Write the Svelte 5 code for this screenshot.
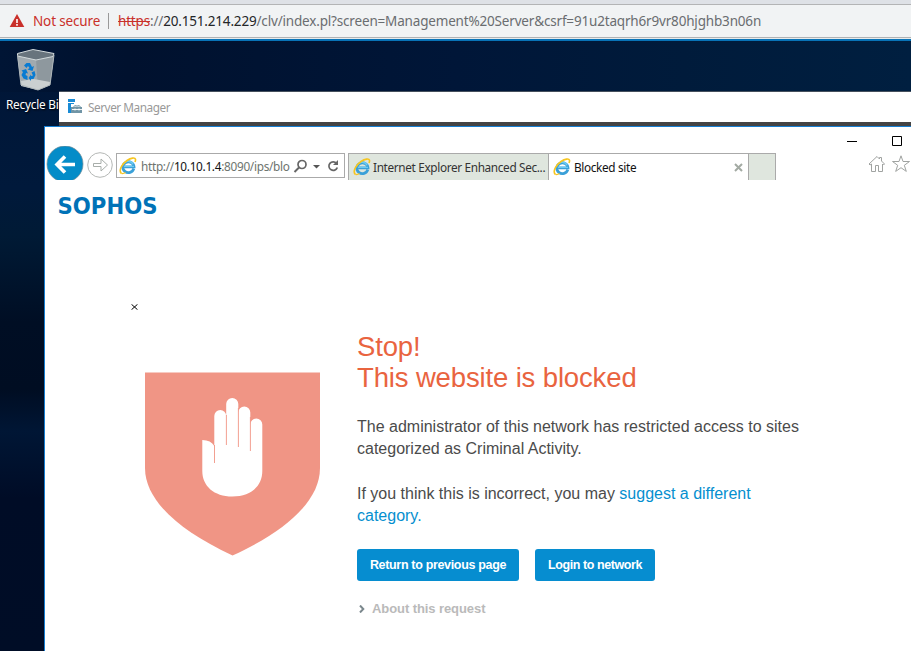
<script>
  const tabs = [
    { title: 'Internet Explorer Enhanced Sec...', active: false },
    { title: 'Blocked site', active: true }
  ];
</script>

{#snippet ieIcon()}
  <svg class="ie" viewBox="0 0 18 18" width="18" height="18">
    <path d="M14.8 11.7A5.6 5.4 0 1 1 15 9.8H5.4" fill="none" stroke="#3aa0d8" stroke-width="2.8" />
    <path d="M14.2 7.4A5.6 5.6 0 0 0 3.9 8M5 9.3H15" fill="none" stroke="#6ccbf2" stroke-width="1.3" />
    <path d="M2.3 16.4C-.5 13.5 2.6 7.2 8 3.5C12 .8 16 .3 16.5 2.3C16.7 3.2 16.4 4 16 5" fill="none" stroke="#f6c51f" stroke-width="1.6" />
    <path d="M2.3 16.4Q4.5 16.9 6.5 15.5" fill="none" stroke="#f6c51f" stroke-width="1.2" />
  </svg>
{/snippet}

<div class="screen">
  <header class="omnibox">
    <svg width="16" height="14" viewBox="0 0 16 14"><path d="M8 0L15.3 13H.7Z" fill="#c9302a" /><path d="M8 5v4M8 10v1.7" stroke="#fff" stroke-width="1.6" /></svg>
    <span class="warn">Not secure</span>
    <i class="divider"></i>
    <span class="address"><s>https</s>://<b>20.151.214.229</b>/clv/index.pl?screen=Management%20Server&amp;csrf=91u2taqrh6r9vr80hjghb3n06n</span>
  </header>

  <main class="desktop">
    <div class="recycle">
      <svg width="40" height="44" viewBox="0 0 40 44">
        <path d="M1 6L20 11L38 8L34 37L22 42L5 37Z" fill="#a1aaaf" />
        <path d="M20 11L38 8L34 37L22 42Z" fill="#8e989e" />
        <path d="M5 33L18 31L34 34L34 37L22 42L5 38Z" fill="#cbd0d1" />
        <path d="M1.5 5.5L17 1.5L38 5.5L37 8.5L20 12L1.5 8Z" fill="#68747d" stroke="#d3dadc" />
        <path d="M1.5 7L5 37L22 42L34 37L38 7" fill="none" stroke="#aeb6b9" />
        <g fill="#087bd2">
          <path d="M8 17.5L10.5 15H14L16 19L18 18L16.5 23L11.5 21.5L13.5 20L12 18L10.5 20Z" />
          <path d="M5.5 22.5L10 21L12 25.5L10 25L9.5 27L11.5 28V32L7.5 30.5L5.5 27L7 24Z" />
          <path d="M15.5 24.5L18.5 23L19.5 27L17.5 31L15 31V33L12.5 30L15 26.5V28L17 27.5Z" />
        </g>
      </svg>
      <span>Recycle Bin</span>
    </div>

    <section class="server-manager">
      <svg width="16" height="16" viewBox="0 0 16 16">
        <path d="M1 0H8V3H1ZM1 4H4V14H1Z" fill="#198bd5" /><path d="M3 4H7V5H4V14H3Z" fill="#198bd5" />
        <path d="M4 8H6L8 6H12L14 8H15V14H4Z" fill="#7195a6" /><path d="M7.5 8L8.5 7H11.5L12.5 8M5 10.5H15M8 9.5V11.5M12 9.5V11.5" fill="none" stroke="#fff" stroke-width=".9" />
      </svg>
      <span>Server Manager</span>
    </section>

    <section class="browser">
      <div class="controls">
        <svg width="11" height="11" viewBox="0 0 11 11"><path d="M0 5.5H10" stroke="#000" /></svg>
        <svg width="11" height="11" viewBox="0 0 11 11"><path d="M.5 .5H9.5V9.5H.5Z" fill="none" stroke="#000" /></svg>
      </div>
      <div class="toolbar">
        <svg class="nav" width="70" height="34" viewBox="0 0 70 34">
          <circle cx="20" cy="18" r="18" fill="#048cc8" stroke="#718b96" stroke-width=".7" />
          <path d="M30 18.5H13M20 10.5L12 18.5L20 26.5" fill="none" stroke="#fff" stroke-width="3.6" />
          <circle cx="55" cy="19" r="12.3" fill="#fff" stroke="#b5b8b6" />
          <path d="M48.5 17.5H56V13L62.5 19L56 25V20.5H48.5Z" fill="#fff" stroke="#a8aeaa" />
        </svg>
        <div class="location">
          {@render ieIcon()}
          <span class="loc-text">http://<b>10.10.1.4</b>:8090/ips/blo</span>
          <svg class="tools" width="47" height="16" viewBox="0 0 47 16">
            <circle cx="9" cy="6.5" r="4" fill="none" stroke="#666" stroke-width="1.7" /><path d="M6 9.5L1.5 14" stroke="#666" stroke-width="2" />
            <path d="M20 7H27L23.5 10.5Z" fill="#555" />
            <path d="M43.5 5.3A4.3 4.3 0 1 0 44.3 9.5" fill="none" stroke="#666" stroke-width="1.7" /><path d="M45 2V7H40Z" fill="#666" />
          </svg>
        </div>
        <div class="tabs">
          {#each tabs as tab}
            <div class="tab" class:active={tab.active}>
              {@render ieIcon()}
              <span>{tab.title}</span>
              {#if tab.active}
                <svg class="close" width="9" height="9" viewBox="0 0 9 9"><path d="M1 1L8 8M8 1L1 8" stroke="#a3aaa3" stroke-width="2" /></svg>
              {/if}
            </div>
          {/each}
          <div class="new-tab"></div>
        </div>
        <svg class="shortcuts" width="43" height="18" viewBox="0 0 43 18">
          <path d="M1 9L9 1.5L11.5 4V2.5H13.5V6L16.5 9L15.5 10L14.5 9V16.5H10.5V10.5H7.5V16.5H3.5V9L2 10Z" fill="#fff" stroke="#a0a3a1" />
          <path d="M33 .8L35 6.5H41.5L36.3 10.3L38.3 16.4L33 12.7L27.7 16.4L29.7 10.3L24.5 6.5H31Z" fill="#fff" stroke="#a0a3a1" />
        </svg>
      </div>

      <div class="page">
        <svg class="logo" width="100" height="20" viewBox="0 0 100 20"><text x="-.5" y="18" textLength="100" lengthAdjust="spacingAndGlyphs">SOPHOS</text></svg>
        <svg class="missing" width="7" height="6" viewBox="0 0 7 6"><path d="M.5 .3L6.5 5.7M6.5 .3L.5 5.7" stroke="#000" /></svg>
        <div class="notice">
          <svg class="shield" width="176" height="184" viewBox="0 0 176 184">
            <path d="M0 .5H175V96C175 128 143 158 87.5 183.5C33 158 0 128 0 96Z" fill="#f09585" />
            <path d="M57.3 68Q66 68 69.3 74V44A5.6 5.6 0 0 1 81.2 44V32A5.6 5.6 0 0 1 93.3 32V40.5A5.6 5.6 0 0 1 105.3 40.5V52.5A5.6 5.6 0 0 1 117.3 52.5V99C117.3 114 106 124.5 87.3 124.5C69 124.5 57.3 114 57.3 99Z" fill="#fff" />
            <path d="M69.5 73V91M81.4 43V73M93.4 36V75M105.4 45V79" stroke="#f09585" stroke-width=".9" />
          </svg>
          <div class="message">
            <h1>Stop!<br />This website is blocked</h1>
            <p>The administrator of this network has restricted access to sites<br />categorized as Criminal Activity.</p>
            <p>If you think this is incorrect, you may <a href="#suggest">suggest a different<br />category.</a></p>
            <div class="actions"><button class="back">Return to previous page</button><button class="login">Login to network</button></div>
            <div class="about">
              <svg width="6" height="8" viewBox="0 0 6 8"><path d="M1 .5L4.3 4L1 7.5" fill="none" stroke="#7b888d" stroke-width="2" /></svg>
              <span>About this request</span>
            </div>
          </div>
        </div>
      </div>
    </section>
  </main>
</div>

<style>
  :global(body) { margin: 0; overflow: hidden; }
  * { box-sizing: border-box; }
  svg { display: block; flex: none; }
  .screen { width: 911px; height: 651px; overflow: hidden; display: flex; flex-direction: column; font-family: "Noto Sans", "Open Sans", sans-serif; white-space: nowrap; }
  .omnibox { height: 39px; flex: none; display: flex; align-items: center; border-top: 4px solid #dee1e6; border-bottom: 1px solid #e6eaec; padding-left: 9px; background: #f1f3f4; box-shadow: inset 0 1px #b3b4b5, inset 0 -1px #b0b2b4; font-size: 13.5px; color: #6a6d70; }
  .warn { color: #c9302a; width: 67px; margin-left: 8px; letter-spacing: -.15px; }
  .divider { width: 1px; height: 16px; background: #999; margin: 0 9px 0 8px; }
  .address { letter-spacing: -.175px; }
  .address b { font-weight: 400; color: #242628; }
  .address s { color: #c9302a; }
  .desktop { position: relative; flex: 1; border-top: 2px solid #0873b7; background: linear-gradient(180deg, #001536 0, #00193b 24%, #001a35 32%, #000e24 46%, #000d22 57%, #001635 64%, #000c26 75%, #000d26 100%); }
  .desktop::before { content: ""; position: absolute; left: 0; right: 0; top: 0; height: 51px; background: linear-gradient(90deg, #001535 0, #00112e 14%, #001638 50%, #001b3b 75%, #001f40 100%); }
  .recycle { position: absolute; left: 6px; top: 7px; }
  .recycle svg { margin-left: 10px; }
  .recycle span { display: block; margin-top: 3px; font-size: 11.8px; letter-spacing: -.22px; line-height: 18px; color: #fff; text-shadow: 1px 1px 2px #000; }
  .server-manager { position: absolute; left: 59px; top: 50px; right: 0; height: 35px; border-bottom: 4px solid #444; border-top: 1px solid #46505d; background: #fff; display: flex; align-items: center; padding-left: 8px; gap: 5px; font-size: 11.8px; letter-spacing: -.46px; color: #999; }
  .browser { position: absolute; left: 44px; top: 85px; right: 0; bottom: 0; border: solid #167fd3; border-width: 1px 0 0 1px; background: #fff; display: flex; flex-direction: column; }
  .controls { height: 19px; flex: none; display: flex; justify-content: flex-end; gap: 34px; padding: 9px 8px 0 0; }
  .toolbar { height: 34px; flex: none; display: flex; }
  .location { flex: none; width: 229px; height: 25px; margin: 7px 3px 0 1px; border: 1px solid #aaa; display: flex; align-items: center; padding-left: 2px; font-size: 11.8px; color: #6d746e; }
  .loc-text { width: 150px; margin-left: 4px; letter-spacing: -.3px; }
  .location b { font-weight: 400; color: #111; }
  .tools { margin-left: 2px; }
  .tabs { flex: none; display: flex; margin-top: 7px; }
  .tab { width: 201px; height: 27px; border: 1px solid #aaa; border-bottom: 0; background: #dfe6de; display: flex; align-items: center; padding-left: 4px; gap: 2px; font-size: 11.8px; letter-spacing: -.35px; color: #333; }
  .tab.active { width: 200px; border-left: 0; background: #fff; color: #111; padding-left: 4px; }
  .tab span { margin-left: 1px; }
  .tab:not(.active) span { margin-left: 0; }
  .close { margin: 0 5px 0 auto; }
  .new-tab { width: 27px; height: 27px; border: solid #aaa; border-width: 1px 1px 0 0; background: #dfe6de; }
  .shortcuts { margin: 9px 0 0 92px; }
  .page { flex: 1; display: flex; flex-direction: column; align-items: flex-start; font-family: "Liberation Sans", Arial, sans-serif; }
  .logo { margin: 16px 0 0 13px; overflow: visible; }
  .logo text { font: 700 23px "DejaVu Sans", sans-serif; fill: #0072b7; }
  .missing { margin: 88px 0 0 86px; }
  .notice { display: flex; }
  .shield { margin: 62px 0 0 100px; }
  .message { margin: 21px 0 0 36px; color: #4b4b4b; font-size: 16px; line-height: 22px; }
  h1 { margin: 0 0 23px; font-size: 27.5px; font-weight: 400; line-height: 31px; color: #e9643f; letter-spacing: -.14px; }
  p { margin: 0 0 23px; }
  a { color: #058fcf; text-decoration: none; }
  .actions { display: flex; gap: 16px; margin-top: -1px; }
  button { height: 32px; padding: 0; border: 0; border-radius: 3px; background: #068dd0; color: #fff; font: 700 12.5px "Liberation Sans", sans-serif; letter-spacing: -.33px; }
  .back { width: 162px; }
  .login { width: 120px; letter-spacing: -.42px; }
  .about { display: flex; align-items: center; gap: 7px; margin: 17px 0 0 2px; font-size: 13px; font-weight: 700; letter-spacing: -.08px; color: #bababa; }
</style>
